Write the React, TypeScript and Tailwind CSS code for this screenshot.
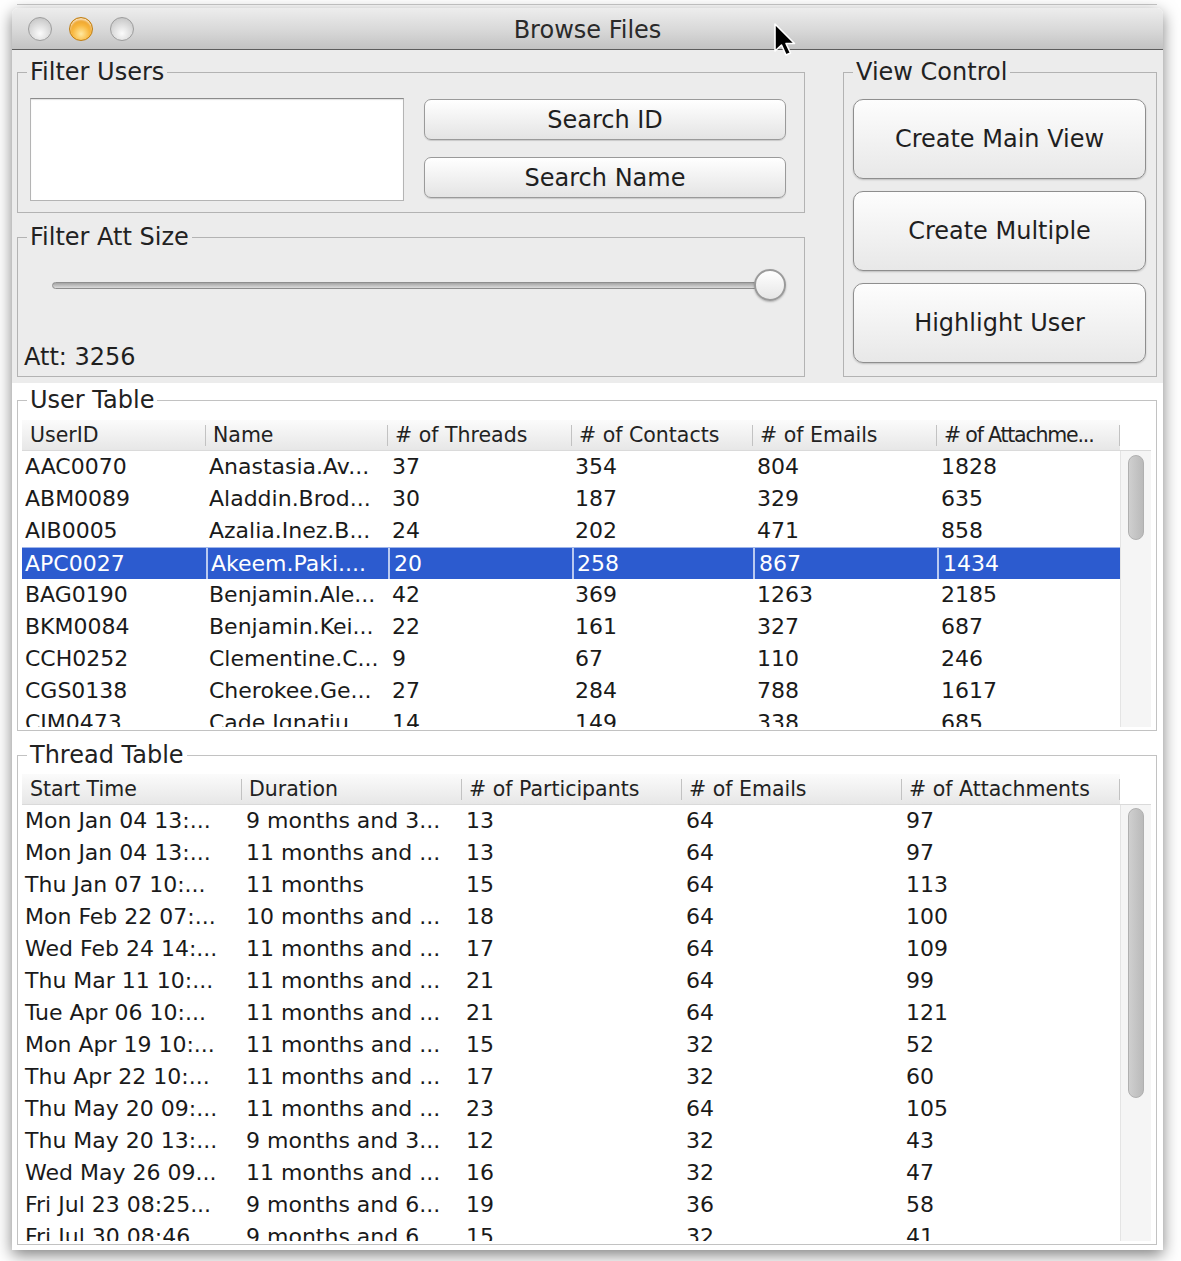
import React from "react";

type Col = { label: string; w: string; head: string; cell: string };

const userCols: Col[] = [
  { label: "UserID", w: "w-[184px]", head: "pl-[8px]", cell: "pl-[3px]" },
  { label: "Name", w: "w-[182px]", head: "pl-[7px]", cell: "pl-[3px]" },
  { label: "# of Threads", w: "w-[184px]", head: "pl-[7px]", cell: "pl-[4px]" },
  { label: "# of Contacts", w: "w-[181px]", head: "pl-[7px]", cell: "pl-[3px]" },
  { label: "# of Emails", w: "w-[184px]", head: "pl-[7px]", cell: "pl-[4px]" },
  { label: "# of Attachme...", w: "w-[183px]", head: "pl-[7px] tracking-[-1.2px]", cell: "pl-[4px]" },
];

const users = [
  ["AAC0070", "Anastasia.Av...", "37", "354", "804", "1828"],
  ["ABM0089", "Aladdin.Brod...", "30", "187", "329", "635"],
  ["AIB0005", "Azalia.Inez.B...", "24", "202", "471", "858"],
  ["APC0027", "Akeem.Paki....", "20", "258", "867", "1434"],
  ["BAG0190", "Benjamin.Ale...", "42", "369", "1263", "2185"],
  ["BKM0084", "Benjamin.Kei...", "22", "161", "327", "687"],
  ["CCH0252", "Clementine.C...", "9", "67", "110", "246"],
  ["CGS0138", "Cherokee.Ge...", "27", "284", "788", "1617"],
  ["CIM0473", "Cade.Ignatiu...", "14", "149", "338", "685"],
];

const threadCols: Col[] = [
  { label: "Start Time", w: "w-[220px]", head: "pl-[8px]", cell: "pl-[3px]" },
  { label: "Duration", w: "w-[220px]", head: "pl-[7px]", cell: "pl-[4px]" },
  { label: "# of Participants", w: "w-[220px]", head: "pl-[7px]", cell: "pl-[4px]" },
  { label: "# of Emails", w: "w-[220px]", head: "pl-[7px]", cell: "pl-[4px]" },
  { label: "# of Attachments", w: "w-[218px]", head: "pl-[7px]", cell: "pl-[4px]" },
];

const threads = [
  ["Mon Jan 04 13:...", "9 months and 3...", "13", "64", "97"],
  ["Mon Jan 04 13:...", "11 months and ...", "13", "64", "97"],
  ["Thu Jan 07 10:...", "11 months", "15", "64", "113"],
  ["Mon Feb 22 07:...", "10 months and ...", "18", "64", "100"],
  ["Wed Feb 24 14:...", "11 months and ...", "17", "64", "109"],
  ["Thu Mar 11 10:...", "11 months and ...", "21", "64", "99"],
  ["Tue Apr 06 10:...", "11 months and ...", "21", "64", "121"],
  ["Mon Apr 19 10:...", "11 months and ...", "15", "32", "52"],
  ["Thu Apr 22 10:...", "11 months and ...", "17", "32", "60"],
  ["Thu May 20 09:...", "11 months and ...", "23", "64", "105"],
  ["Thu May 20 13:...", "9 months and 3...", "12", "32", "43"],
  ["Wed May 26 09...", "11 months and ...", "16", "32", "47"],
  ["Fri Jul 23 08:25...", "9 months and 6...", "19", "36", "58"],
  ["Fri Jul 30 08:46...", "9 months and 6...", "15", "32", "41"],
];

function Group({ title, className, children }: { title: string; className: string; children: React.ReactNode }) {
  return (
    <fieldset className={`border ${className}`}>
      <legend className="ml-[9px] px-[3px] text-[24px] leading-[28px] text-[#222]">{title}</legend>
      {children}
    </fieldset>
  );
}

function Light({ orange }: { orange?: boolean }) {
  return orange ? (
    <div className="h-[24px] w-[24px] rounded-full border border-[#c07e12] bg-[radial-gradient(circle_at_50%_72%,#ffe9a0_0%,#f8b73e_45%,#e08c16_100%)] shadow-[inset_0_2px_2px_rgba(255,255,255,0.7)]" />
  ) : (
    <div className="h-[24px] w-[24px] rounded-full border border-[#9d9d9d] bg-[radial-gradient(circle_at_50%_70%,#fbfbfb_0%,#dcdcdc_50%,#bcbcbc_100%)]" />
  );
}

function Table({ cols, rows, selected, viewH, thumbTop, thumbH }: {
  cols: Col[]; rows: string[][]; selected?: number; viewH: string; thumbTop: string; thumbH: string;
}) {
  return (
    <div className="flex flex-col">
      <div className="flex h-[31px] border-b border-[#dadada]">
        <div className="flex bg-linear-to-b from-[#fbfbfb] to-[#e7e7e7]">
          {cols.map((c) => (
            <div key={c.label} className={`flex ${c.w} items-center justify-between`}>
              <span className={`truncate text-[20.5px] text-[#222] ${c.head}`}>{c.label}</span>
              <span className="h-[21px] w-px shrink-0 bg-[#c2c2c2]" />
            </div>
          ))}
        </div>
        <div className="w-[31px] bg-white" />
      </div>
      <div className="flex">
        <div className={`w-[1098px] overflow-hidden ${viewH}`}>
          {rows.map((r, i) => (
            <div
              key={i}
              className={
                i === selected
                  ? "flex h-[32px] border-t border-[#9fb5ea] bg-[#2c5bcf] text-white"
                  : "flex h-[32px] text-[#1a1a1a]"
              }
            >
              {r.map((v, j) => (
                <div
                  key={j}
                  className={`${cols[j].w} shrink-0 truncate whitespace-nowrap text-[22px] ${
                    i === selected ? "leading-[31px]" : "leading-[32px]"
                  } ${cols[j].cell} ${i === selected && j > 0 ? "border-l-2 border-[#b9c9f0]" : ""}`}
                >
                  {v}
                </div>
              ))}
            </div>
          ))}
        </div>
        <div className={`w-[31px] border-l border-[#e4e4e4] bg-[#f5f5f5] pl-[7px] ${thumbTop}`}>
          <div className={`w-[16px] rounded-full border border-[#b0b0b0] bg-linear-to-r from-[#cfcfcf] to-[#bababa] ${thumbH}`} />
        </div>
      </div>
    </div>
  );
}

export default function App() {
  return (
    <div className="relative h-[1261px] w-[1181px] overflow-hidden bg-white pt-[4px] font-['DejaVu_Sans',sans-serif] text-[#1f1f1f]">
      <div className="ml-[17px] h-px w-[1140px] bg-[#cbcbcb]" />

      {/* window */}
      <div className="ml-[12px] mt-[3px] flex h-[1242px] w-[1151px] flex-col overflow-hidden rounded-t-[6px] shadow-[0_5px_16px_rgba(0,0,0,0.5)]">
        <div className="grid h-[42px] grid-cols-[1fr_auto_1fr] items-center border-b border-[#5d5d5d] bg-linear-to-b from-[#ededed] via-[#dadada] to-[#c3c3c3]">
          <div className="flex items-center gap-[17px] pl-[16px]">
            <Light />
            <Light orange />
            <Light />
          </div>
          <div className="pt-[2px] text-[24px] text-[#2a2a2a]">Browse Files</div>
          <div />
        </div>

        <div className="flex gap-[38px] bg-[#ececec] pb-[6px] pl-[5px] pr-[6px] pt-[8px]">
          <div className="flex w-[788px] flex-col gap-[10px]">
            <Group title="Filter Users" className="border-[#b3b3b3]">
              <div className="flex gap-[20px] pb-[11px] pl-[12px] pr-[18px] pt-[12px]">
                <div className="h-[103px] w-[374px] border border-[#b4b4b4] border-t-[#8b8b8b] bg-white shadow-[inset_0_1px_1px_rgba(0,0,0,0.12)]" />
                <div className="flex w-[362px] flex-col gap-[17px] pt-[1px]">
                  <button className="h-[41px] rounded-[7px] border border-[#9a9a9a] bg-linear-to-b from-white to-[#e4e4e4] text-[24px] text-[#1f1f1f] shadow-[0_1px_1px_rgba(0,0,0,0.15)]">
                    Search ID
                  </button>
                  <button className="h-[41px] rounded-[7px] border border-[#9a9a9a] bg-linear-to-b from-white to-[#e4e4e4] text-[24px] text-[#1f1f1f] shadow-[0_1px_1px_rgba(0,0,0,0.15)]">
                    Search Name
                  </button>
                </div>
              </div>
            </Group>

            <Group title="Filter Att Size" className="border-[#b3b3b3]">
              <div className="flex flex-col pb-[5px] pt-[18px]">
                <div className="flex h-[32px] items-center pl-[34px]">
                  <div className="h-[7px] w-[718px] rounded-full border border-[#8e8e8e] bg-linear-to-b from-[#a4a4a4] to-[#dcdcdc]" />
                  <div className="relative -ml-[16px] h-[32px] w-[32px] rounded-full border-2 border-[#9a9a9a] bg-linear-to-b from-white to-[#e6e6e6] shadow-[0_1px_2px_rgba(0,0,0,0.25)]" />
                </div>
                <div className="mt-[42px] pl-[6px] text-[24px] leading-[28px]">Att: 3256</div>
              </div>
            </Group>
          </div>

          <Group title="View Control" className="w-[314px] border-[#b3b3b3]">
            <div className="flex flex-col gap-[12px] pb-[13px] pl-[9px] pr-[10px] pt-[13px]">
              {["Create Main View", "Create Multiple", "Highlight User"].map((t) => (
                <button
                  key={t}
                  className="h-[80px] rounded-[10px] border border-[#8e8e8e] bg-linear-to-b from-[#fdfdfd] to-[#e8e8e8] text-[24px] text-[#1f1f1f] shadow-[0_1px_2px_rgba(0,0,0,0.2)]"
                >
                  {t}
                </button>
              ))}
            </div>
          </Group>
        </div>

        <div className="flex flex-1 flex-col gap-[10px] bg-white pb-[5px] pl-[5px] pr-[6px] pt-[3px]">
          <Group title="User Table" className="border-[#c2c2c2]">
            <div className="pb-[3px] pl-[4px] pr-[5px] pt-[6px]">
              <Table cols={userCols} rows={users} selected={3} viewH="h-[276px]" thumbTop="pt-[4px]" thumbH="h-[85px]" />
            </div>
          </Group>
          <Group title="Thread Table" className="border-[#c2c2c2]">
            <div className="pb-[3px] pl-[4px] pr-[5px] pt-[5px]">
              <Table cols={threadCols} rows={threads} viewH="h-[436px]" thumbTop="pt-[3px]" thumbH="h-[290px]" />
            </div>
          </Group>
        </div>
      </div>

      {/* mouse pointer */}
      <svg className="absolute left-[773px] top-[22px]" width="26" height="38" viewBox="0 0 26 38">
        <path
          d="M2 2 L2 29 L8.5 23 L13 33 L17.5 31 L13 21.5 L21.5 21.5 Z"
          fill="#000"
          stroke="#fff"
          strokeWidth="1.6"
          strokeLinejoin="round"
        />
      </svg>
    </div>
  );
}
